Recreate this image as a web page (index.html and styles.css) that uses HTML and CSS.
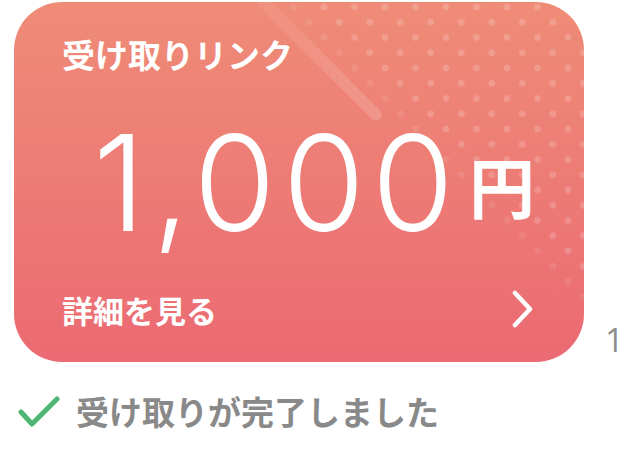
FILE: index.html
```html
<!doctype html>
<html>
<head>
<meta charset="utf-8">
<meta name="viewport" content="width=device-width, initial-scale=1">
<title>受け取りリンク</title>
<link rel="stylesheet" href="styles.css">
</head>
<body>
<div class="page">
	<div class="top">
		<div class="card">
			<div class="card-title">受け取りリンク</div>
			<div class="amount"><span class="num">1,000</span><span class="yen">円</span></div>
			<div class="card-foot">
				<span>詳細を見る</span>
				<svg class="chev" width="24" height="38" viewBox="0 0 24 38"><polyline points="4,3 19,19 4,35" fill="none" stroke="#fff" stroke-width="4.5" stroke-linecap="round" stroke-linejoin="round"/></svg>
			</div>
		</div>
		<div class="side">1</div>
	</div>
	<div class="status">
		<svg class="check" width="42" height="32" viewBox="0 0 42 32"><polyline points="3,16 14,28 39,3" fill="none" stroke="#4db674" stroke-width="5" stroke-linecap="round" stroke-linejoin="round"/></svg>
		<span>受け取りが完了しました</span>
	</div>
</div>
</body>
</html>
```

FILE: styles.css
```css
body {
	margin: 0;
	background: #fff;
	font-family: "Noto Sans CJK JP", sans-serif;
}
.page {
	width: 622px;
	height: 461px;
	overflow: hidden;
}
.top {
	display: flex;
	align-items: flex-end;
	padding: 2px 0 0 14px;
}
.card {
	position: relative;
	overflow: hidden;
	flex: none;
	width: 570px;
	height: 360px;
	box-sizing: border-box;
	padding: 36px 49px 34px 48px;
	border-radius: 48px;
	background: linear-gradient(#ef8c77, #eb6a73);
	color: #fff;
	display: flex;
	flex-direction: column;
}
/* dot pattern, top right */
.card::before {
	content: "";
	position: absolute;
	left: 0;
	top: 0;
	right: 0;
	bottom: 0;
	background-image:
		radial-gradient(circle at 5px 5px, rgba(255,255,255,.18) 3px, transparent 3.8px),
		radial-gradient(circle at 20.25px 20.25px, rgba(255,255,255,.18) 3px, transparent 3.8px);
	background-size: 30.5px 30.5px;
	-webkit-mask-image: linear-gradient(45deg, transparent 65%, #000 71%);
	mask-image: linear-gradient(45deg, transparent 65%, #000 71%);
}
/* light streak */
.card::after {
	content: "";
	position: absolute;
	left: 300px;
	top: -28px;
	width: 12px;
	height: 170px;
	border-radius: 6px;
	background: linear-gradient(rgba(255,255,255,.05), rgba(255,255,255,.16));
	transform: rotate(-45deg);
}
.card-title {
	position: relative;
	font-size: 33px;
	line-height: 33px;
	font-weight: 700;
}
.amount {
	position: relative;
	margin: 45px 0 0 31px;
	line-height: 1;
	white-space: nowrap;
}
.num {
	font-family: "Inter", sans-serif;
	font-weight: 300;
	font-size: 133px;
	letter-spacing: 7px;
}
.yen {
	font-size: 66px;
	font-weight: 700;
	vertical-align: 18px;
	margin-left: 8px;
}
.card-foot {
	position: relative;
	margin-top: auto;
	display: flex;
	justify-content: space-between;
	align-items: center;
	font-size: 31px;
	line-height: 31px;
	font-weight: 700;
}
.side {
	margin: 0 0 6px 21px;
	font-family: "Open Sans", sans-serif;
	font-size: 33px;
	line-height: 33px;
	color: #8e8e8e;
}
.status {
	display: flex;
	align-items: center;
	margin-top: 33px;
	padding-left: 18px;
	font-size: 33px;
	line-height: 33px;
	font-weight: 700;
	color: #898989;
}
.check {
	margin-right: 16px;
}
```
